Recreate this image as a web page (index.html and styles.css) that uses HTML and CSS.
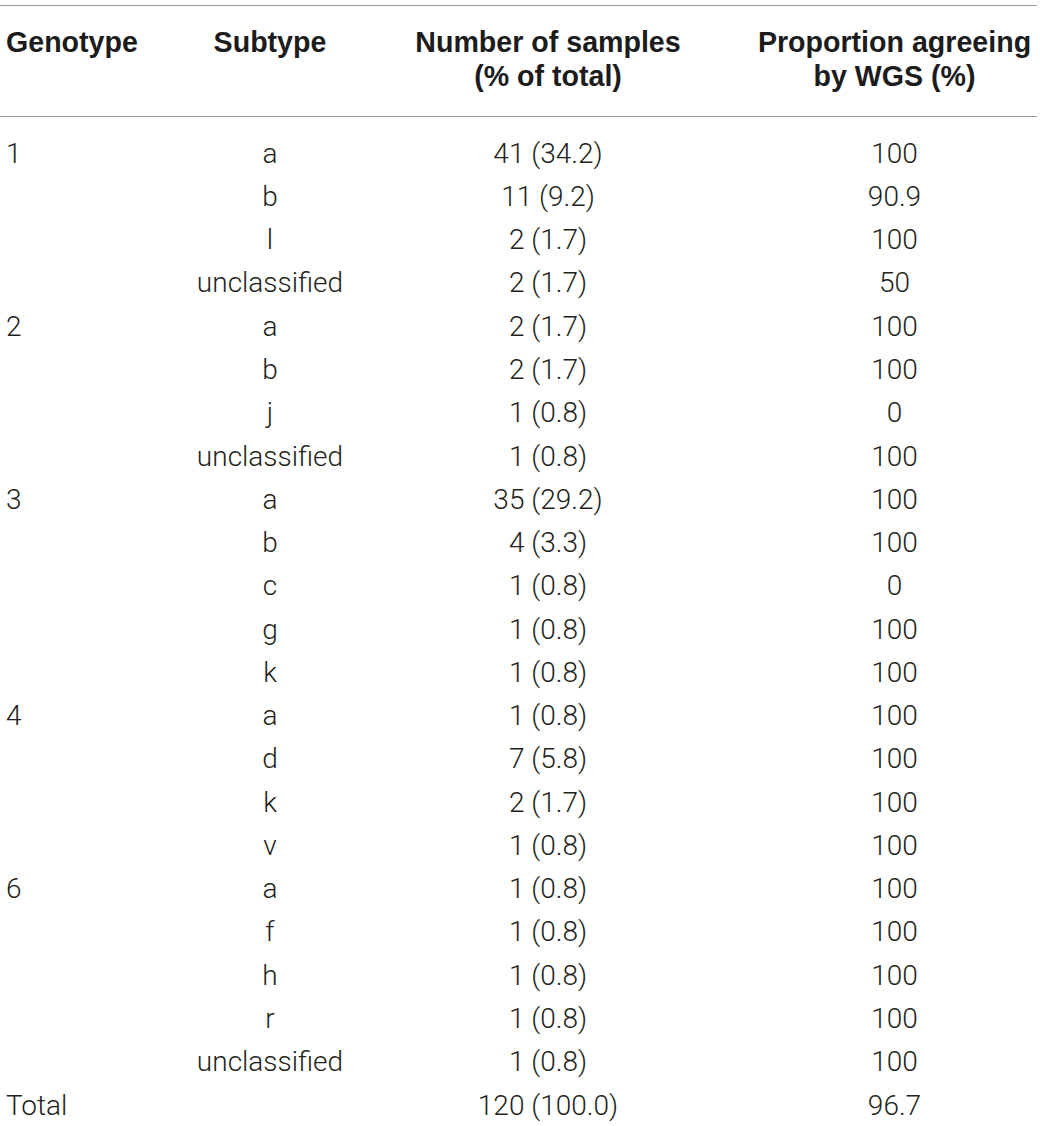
FILE: index.html
```html
<!DOCTYPE html>
<html lang="en">

<head>
    <meta charset="UTF-8">
    <meta name="viewport" content="width=device-width, initial-scale=1.0">
    <title>HCV subtype agreement</title>
    <link rel="stylesheet" href="styles.css">
</head>

<body>
    <table class="subtype-table">
        <colgroup>
            <col class="col-genotype">
            <col class="col-subtype">
            <col class="col-samples">
            <col class="col-proportion">
        </colgroup>
        <thead>
            <tr>
                <th class="left">Genotype</th>
                <th>Subtype</th>
                <th>Number of samples<br>(% of total)</th>
                <th class="last">Proportion agreeing<br>by WGS (%)</th>
            </tr>
        </thead>
        <tbody>
            <tr class="first"><td class="left">1</td><td>a</td><td>41 (34.2)</td><td class="last">100</td></tr>
            <tr><td class="left"></td><td>b</td><td>11 (9.2)</td><td class="last">90.9</td></tr>
            <tr><td class="left"></td><td>l</td><td>2 (1.7)</td><td class="last">100</td></tr>
            <tr><td class="left"></td><td>unclassified</td><td>2 (1.7)</td><td class="last">50</td></tr>
            <tr><td class="left">2</td><td>a</td><td>2 (1.7)</td><td class="last">100</td></tr>
            <tr><td class="left"></td><td>b</td><td>2 (1.7)</td><td class="last">100</td></tr>
            <tr><td class="left"></td><td>j</td><td>1 (0.8)</td><td class="last">0</td></tr>
            <tr><td class="left"></td><td>unclassified</td><td>1 (0.8)</td><td class="last">100</td></tr>
            <tr><td class="left">3</td><td>a</td><td>35 (29.2)</td><td class="last">100</td></tr>
            <tr><td class="left"></td><td>b</td><td>4 (3.3)</td><td class="last">100</td></tr>
            <tr><td class="left"></td><td>c</td><td>1 (0.8)</td><td class="last">0</td></tr>
            <tr><td class="left"></td><td>g</td><td>1 (0.8)</td><td class="last">100</td></tr>
            <tr><td class="left"></td><td>k</td><td>1 (0.8)</td><td class="last">100</td></tr>
            <tr><td class="left">4</td><td>a</td><td>1 (0.8)</td><td class="last">100</td></tr>
            <tr><td class="left"></td><td>d</td><td>7 (5.8)</td><td class="last">100</td></tr>
            <tr><td class="left"></td><td>k</td><td>2 (1.7)</td><td class="last">100</td></tr>
            <tr><td class="left"></td><td>v</td><td>1 (0.8)</td><td class="last">100</td></tr>
            <tr><td class="left">6</td><td>a</td><td>1 (0.8)</td><td class="last">100</td></tr>
            <tr><td class="left"></td><td>f</td><td>1 (0.8)</td><td class="last">100</td></tr>
            <tr><td class="left"></td><td>h</td><td>1 (0.8)</td><td class="last">100</td></tr>
            <tr><td class="left"></td><td>r</td><td>1 (0.8)</td><td class="last">100</td></tr>
            <tr><td class="left"></td><td>unclassified</td><td>1 (0.8)</td><td class="last">100</td></tr>
            <tr><td class="left">Total</td><td></td><td>120 (100.0)</td><td class="last">96.7</td></tr>
        </tbody>
    </table>
</body>

</html>
```

FILE: styles.css
```css
* {
    margin: 0;
    padding: 0;
    box-sizing: border-box;
}

body {
    background: #ffffff;
    padding-top: 5px;
    font-family: Roboto, "Liberation Sans", Arial, sans-serif;
    color: #231f20;
}

.subtype-table {
    width: 1037px;
    border-collapse: collapse;
    table-layout: fixed;
    border-top: 1px solid #9a9a9a;
}

.col-genotype { width: 180px; }
.col-subtype { width: 180px; }
.col-samples { width: 376px; }
.col-proportion { width: 301px; }

/* header row */
.subtype-table thead th {
    font-family: "Liberation Sans", Arial, sans-serif;
    font-weight: bold;
    font-size: 28.6px;
    line-height: 34px;
    color: #1c1c1c;
    text-align: center;
    vertical-align: top;
    padding: 19px 0 23px;
    border-bottom: 1px solid #9a9a9a;
    white-space: nowrap;
}

/* body rows */
.subtype-table td {
    font-weight: 300;
    font-size: 28px;
    line-height: 43.27px;
    text-align: center;
    white-space: nowrap;
}

.subtype-table tr.first td {
    padding-top: 14.7px;
}

.subtype-table .left {
    text-align: left;
    padding-left: 6px;
}

.subtype-table .last {
    padding-left: 16px;
}
```
